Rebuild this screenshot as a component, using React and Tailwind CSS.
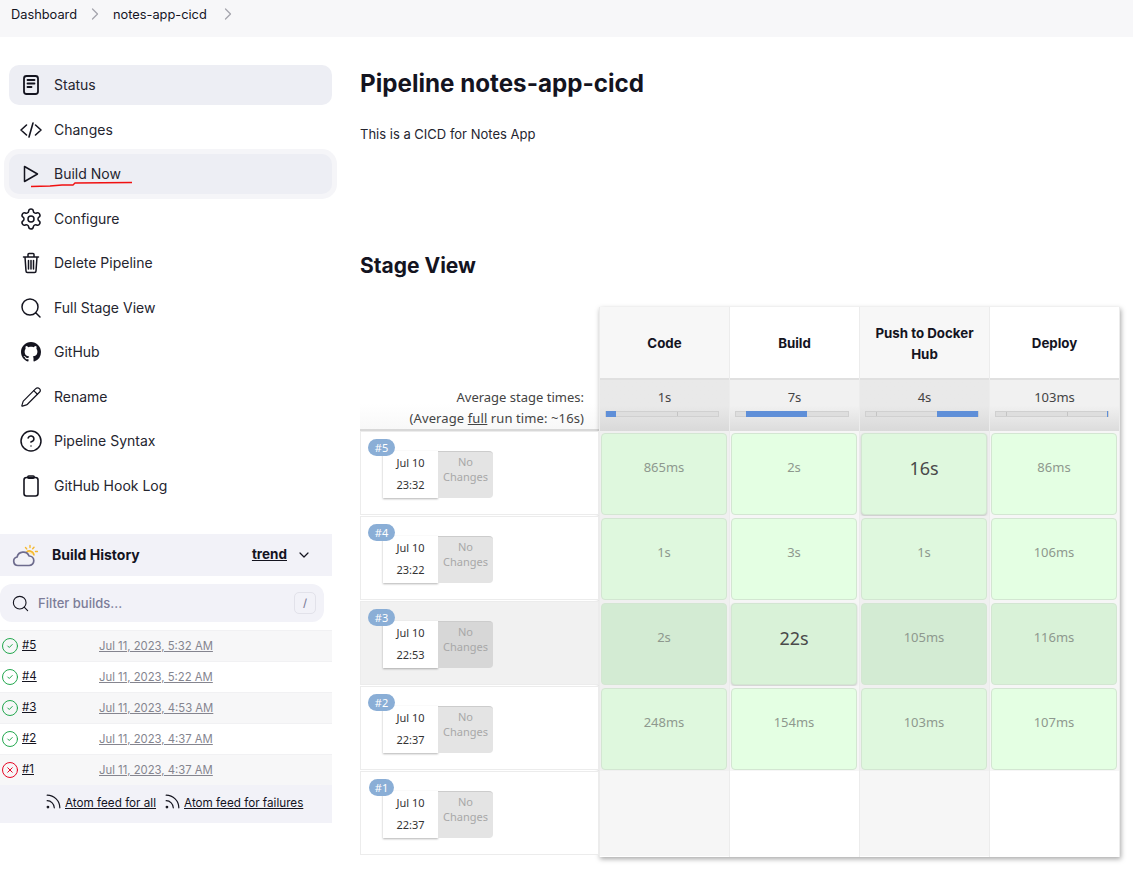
import React from 'react'
import { Settings, Search, Pencil, CircleHelp, ChevronRight, ChevronDown, CircleCheck, CircleX, Rss } from 'lucide-react'
import { BsGithub } from 'react-icons/bs'

const StatusIcon = () => (
  <svg width="24" height="24" viewBox="0 0 24 24" fill="none" stroke="#14141f" strokeWidth="1.8" strokeLinecap="round">
    <rect x="5" y="3" width="14" height="18" rx="2.5" />
    <path d="M8.5 7h7M8.5 10.5h7M8.5 14h4" />
  </svg>
)

const CodeIcon = () => (
  <svg width="24" height="24" viewBox="0 0 24 24" fill="none" stroke="#14141f" strokeWidth="1.6" strokeLinecap="round" strokeLinejoin="round">
    <path d="M7.500 7 2 12l5.500 5M16.500 7 22 12l-5.500 5M14 5l-4 14" />
  </svg>
)

const PlayIcon = () => (
  <svg width="24" height="24" viewBox="0 0 24 24" fill="none" stroke="#14141f" strokeWidth="1.5" strokeLinejoin="round">
    <path d="M5.500 4.500 18.500 12 5.500 19.500Z" />
  </svg>
)

const TrashIcon = () => (
  <svg width="24" height="24" viewBox="0 0 24 24" fill="none" stroke="#14141f" strokeWidth="1.5" strokeLinecap="round" strokeLinejoin="round">
    <path d="M4.500 6h15M9 6V3.500a1 1 0 0 1 1-1h4a1 1 0 0 1 1 1V6M6 6l1 14a1.500 1.500 0 0 0 1.500 1.500h7a1.500 1.500 0 0 0 1.500-1.500l1-14M9.500 9.500v8.500M12 9.500v8.500M14.500 9.500v8.500" />
  </svg>
)

const ClipboardIcon = () => (
  <svg width="24" height="24" viewBox="0 0 24 24" fill="none" stroke="#14141f" strokeWidth="1.6" strokeLinejoin="round">
    <rect x="5" y="3.500" width="14" height="18.500" rx="2.500" />
    <rect x="8.800" y="2" width="6.400" height="2.200" rx="1" />
  </svg>
)

const WeatherIcon = () => (
  <svg width="26" height="24" viewBox="0 0 26 24" fill="none">
    <path d="M18 2.500v2M23.500 8.500h2M22 4.300l-1.300 1.400M13.500 4.500l1.200 1.400" stroke="#f5b82e" strokeWidth="1.400" strokeLinecap="round" />
    <path d="M14.500 9a4.600 4.600 0 0 1 7.500 3.500" stroke="#f5b82e" strokeWidth="1.600" fill="#fde9b5" />
    <path d="M6 22.500a4.300 4.300 0 0 1-.9-8.500 6.300 6.300 0 0 1 12-1 4.800 4.800 0 0 1 4.700 4.800 4.700 4.700 0 0 1-4.700 4.700Z" fill="#f2f2f7" stroke="#6d6b8d" strokeWidth="1.700" strokeLinejoin="round" />
  </svg>
)

const navItems = [
  { label: 'Status', icon: <StatusIcon />, active: true },
  { label: 'Changes', icon: <CodeIcon /> },
  { label: 'Build Now', icon: <PlayIcon />, hover: true },
  { label: 'Configure', icon: <Settings size={24} strokeWidth={1.5} color="#14141f" /> },
  { label: 'Delete Pipeline', icon: <TrashIcon /> },
  { label: 'Full Stage View', icon: <Search size={24} strokeWidth={1.5} color="#14141f" /> },
  { label: 'GitHub', icon: <BsGithub size={20} color="#14141f" /> },
  { label: 'Rename', icon: <Pencil size={22} strokeWidth={1.3} color="#14141f" /> },
  { label: 'Pipeline Syntax', icon: <CircleHelp size={24} strokeWidth={1.5} color="#14141f" /> },
  { label: 'GitHub Hook Log', icon: <ClipboardIcon /> },
]

const history = [
  { id: '#5', date: 'Jul 11, 2023, 5:32 AM', ok: true },
  { id: '#4', date: 'Jul 11, 2023, 5:22 AM', ok: true },
  { id: '#3', date: 'Jul 11, 2023, 4:53 AM', ok: true },
  { id: '#2', date: 'Jul 11, 2023, 4:37 AM', ok: true },
  { id: '#1', date: 'Jul 11, 2023, 4:37 AM', ok: false },
]

const stages = [
  { name: 'Code', avg: '1s', left: 0, width: 9, ticks: [63] },
  { name: 'Build', avg: '7s', left: 9, width: 54, ticks: [] },
  { name: 'Push to Docker Hub', avg: '4s', left: 63, width: 37, ticks: [9] },
  { name: 'Deploy', avg: '103ms', left: 99, width: 1, ticks: [9, 63] },
]

const runs = [
  { id: '#5', date: 'Jul 10', time: '23:32', cells: ['865ms', '2s', '16s', '86ms'] },
  { id: '#4', date: 'Jul 10', time: '23:22', cells: ['1s', '3s', '1s', '106ms'] },
  { id: '#3', date: 'Jul 10', time: '22:53', cells: ['2s', '22s', '105ms', '116ms'], hover: true },
  { id: '#2', date: 'Jul 10', time: '22:37', cells: ['248ms', '154ms', '103ms', '107ms'] },
  { id: '#1', date: 'Jul 10', time: '22:37', cells: [] },
]

const isBig = (text) => text === '16s' || text === '22s'

const RunLabel = ({ run }) => (
  <div className={`relative h-[84px] border border-[#ececec] mb-px pl-[22px] pt-[19px] ${run.hover ? 'bg-[#f1f1f1]' : 'bg-white'}`}>
    <span className={`absolute top-[7px] h-[17px] rounded-full bg-[#8aaed6] text-white text-[11px] leading-[17px] text-center ${run.id === '#1' ? 'left-[8px] w-[25px]' : 'left-[7px] w-[27px]'}`}>{run.id}</span>
    <div className="flex h-[47px]">
      <div className="w-[55px] bg-white shadow-[0_1px_2px_rgba(0,0,0,0.3)] text-center text-[11px] text-[#333] leading-[22px] pt-[1px]">
        <div>{run.date}</div>
        <div>{run.time}</div>
      </div>
      <div className={`w-[55px] rounded-r-[4px] border-t border-[#ccc] text-center text-[11px] leading-[15px] pt-[2px] text-[#a8a8a8] ${run.hover ? 'bg-[#d7d7d7]' : 'bg-[#e4e4e4]'}`}>
        No<br />Changes
      </div>
    </div>
  </div>
)

const StageCell = ({ text, col, hover }) => {
  const shaded = col % 2 === 0
  let color = shaded ? 'bg-[#dff8de]' : 'bg-[#e4ffe3]'
  if (hover) color = shaded ? 'bg-[#d3ebd3]' : 'bg-[#d9f2d8]'
  return (
    <div className={`h-[85px] pl-[1px] pr-[2px] pt-[2px] pb-[1px] ${shaded ? 'bg-[#f0f0f0]' : 'bg-[#f6f6f6]'}`}>
      <div className={`h-full rounded-[4px] border border-[#d3e6d2] flex justify-center ${color} ${isBig(text) ? 'pt-[22px] text-[18px] leading-[24px] text-[#4a4a4a] shadow-[0_1px_2px_rgba(0,0,0,0.18)]' : 'pt-[23px] text-[13px] leading-[20px] text-[#8e988e]'}`}>
        {text}
      </div>
    </div>
  )
}

const StageColumn = ({ stage, index }) => {
  const shaded = index % 2 === 0
  return (
    <div className="w-[130px] flex flex-col border-r border-[#ececec]">
      <div className={`h-[71px] pt-[2px] flex items-center justify-center text-center font-bold text-[13.3px] leading-[21px] text-[#14141f] px-3 ${shaded ? 'bg-[#f7f7f7]' : 'bg-white'}`} style={{ fontFamily: 'Inter, sans-serif' }}>
        {stage.name}
      </div>
      <div className={`h-[53px] relative pt-[7px] text-center text-[13px] leading-[20px] text-[#444] border-t-2 border-[#e0e0e0] bg-gradient-to-b ${shaded ? 'from-[#e9e9e9] via-[#e9e9e9] to-[#d9d9d9]' : 'from-[#f1f1f1] via-[#f1f1f1] to-[#dcdcdc]'}`}>
        {stage.avg}
        <div className="absolute left-[5px] right-[10px] top-[31px] h-[6px] bg-[#dedede] border border-[#d0d0d0]">
          {stage.ticks.map((t) => (
            <span key={t} className="absolute top-0 bottom-0 w-px bg-[#c4c4c4]" style={{ left: `${t}%` }} />
          ))}
          <span className="absolute -top-px -bottom-px min-w-px bg-[#5f8fd8]" style={{ left: `${stage.left}%`, width: `${stage.width}%` }} />
        </div>
      </div>
      {runs.map((run) => (
        run.cells.length > 0
          ? <StageCell key={run.id} text={run.cells[index]} col={index} hover={run.hover} />
          : <div key={run.id} className={`h-[85px] ${shaded ? 'bg-[#f6f6f6]' : 'bg-white'}`} />
      ))}
    </div>
  )
}

export default function App() {
  return (
    <div className="w-[1133px] h-[870px] overflow-hidden bg-white text-[#14141f]" style={{ fontFamily: 'Inter, sans-serif' }}>
      {/* Breadcrumb */}
      <div className="h-[37px] bg-[#f7f7f9] flex items-start pt-[6px] pl-[11px] text-[12.8px] leading-[18px]">
        <span>Dashboard</span>
        <ChevronRight size={20} color="#a5a5ad" className="ml-[8px] mr-[8px] mt-[-2px]" strokeWidth={1.5} />
        <span>notes-app-cicd</span>
        <ChevronRight size={20} color="#a5a5ad" className="ml-[11px] mt-[-2px]" strokeWidth={1.5} />
      </div>

      <div className="flex">
        {/* Left side - tasks and build history */}
        <aside className="w-[332px] shrink-0">
          <nav className="pt-[28px] pl-[9px] relative">
            {navItems.map((item) => (
              <div key={item.label} className={`relative h-[39.5px] mb-[5px] flex items-center rounded-[10px] pl-[10px] text-[14px] ${item.active || item.hover ? 'bg-[#edeef4]' : ''} ${item.hover ? 'shadow-[0_0_0_5px_#f5f5f8]' : ''}`}>
                <span className="w-[24px] h-[24px] mt-[1px] flex items-center justify-center">{item.icon}</span>
                <span className="ml-[11px] text-[#25252f]">{item.label}</span>
                {item.hover && (
                  <svg className="absolute left-[21px] top-[24px]" width="106" height="10" viewBox="0 0 106 10" fill="none">
                    <path d="M1 8.500 20 8l12-1 11 0 2-2 57-.5" stroke="#f01010" strokeWidth="1.300" />
                  </svg>
                )}
              </div>
            ))}
          </nav>

          {/* Build history */}
          <div className="mt-[29px] h-[42px] pb-[1px] bg-[#f2f2f8] flex items-center pl-[12px] text-[14px] font-bold">
            <WeatherIcon />
            <span className="ml-[14px]">Build History</span>
            <span className="ml-auto text-[13.500px] underline">trend</span>
            <ChevronDown size={16} className="ml-[9px] mr-[20px]" strokeWidth={1.8} />
          </div>
          <div className="mt-[8px] h-[38px] w-[324px] rounded-[12px] bg-[#f2f2f8] flex items-center pl-[11px] pr-[8px] text-[13px] font-medium text-[#7d7d99]">
            <Search size={19} color="#14141f" strokeWidth={1.4} />
            <span className="ml-[8px] mt-[1px]">Filter builds...</span>
            <span className="ml-auto w-[22px] h-[22px] rounded-[5px] border border-[#e2e2ea] text-center text-[11px] leading-[20px]">/</span>
          </div>
          <div className="mt-[8px]">
            {history.map((b, i) => (
              <div key={b.id} className={`h-[31px] flex items-center pl-[1px] ${i % 2 === 0 ? 'bg-[#f7f7f8]' : 'bg-white'} border-t border-[#f1f1f3]`}>
                {b.ok
                  ? <CircleCheck size={18} color="#1ea64a" strokeWidth={1.3} />
                  : <CircleX size={18} color="#e6001f" strokeWidth={1.3} />}
                <span className="ml-[3px] w-[77px] text-[11.500px] underline">{b.id}</span>
                <span className="text-[11.300px] underline text-[#85858f]">{b.date}</span>
              </div>
            ))}
          </div>
          <div className="h-[38px] bg-[#f2f2f8] flex items-center justify-start pl-[44px] text-[11.700px]">
            <Rss size={19} strokeWidth={1.5} className="mt-[-5px]" />
            <span className="ml-[2px] underline">Atom feed for all</span>
            <Rss size={19} strokeWidth={1.5} className="ml-[7px] mt-[-5px]" />
            <span className="ml-[2px] underline">Atom feed for failures</span>
          </div>
        </aside>

        {/* Right side - pipeline */}
        <main className="pl-[28px]">
          <h1 className="mt-[32px] text-[24.200px] leading-[30px] font-bold">Pipeline notes-app-cicd</h1>
          <p className="mt-[25px] text-[13px] leading-[20px] text-[#25252f]">This is a CICD for Notes App</p>
          <h2 className="mt-[108px] text-[21px] leading-[28px] font-bold">Stage View</h2>

          <div className="mt-[27px] flex text-[13px]" style={{ fontFamily: '"Noto Sans", sans-serif' }}>
            <div className="w-[239px]">
              <div className="h-[72px]" />
              <div className="h-[52px] pt-[8px] pr-[15px] text-right leading-[21px] text-[#444] border-b-2 border-[#d8d8d8] bg-gradient-to-b from-white via-white to-[#f8f8f8]">
                Average stage times:<br />
                <span className="tracking-[0.1px]">(Average <span className="underline">full</span> run time: ~16s)</span>
              </div>
              {runs.map((run) => <RunLabel key={run.id} run={run} />)}
            </div>
            <div className="flex shadow-[1px_2px_5px_rgba(0,0,0,0.35)] border-l border-[#ececec] h-[550px]">
              {stages.map((stage, i) => <StageColumn key={stage.name} stage={stage} index={i} />)}
            </div>
          </div>
        </main>
      </div>
    </div>
  )
}
